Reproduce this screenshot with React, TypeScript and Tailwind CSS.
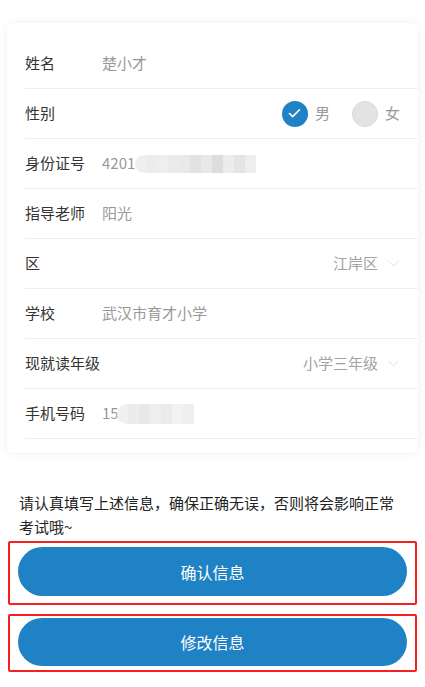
import { ChevronDown, Check } from 'lucide-react';

const font = { fontFamily: '"Noto Sans CJK SC", "Noto Sans", sans-serif' };

const idCells = ['#efefef', '#ececec', '#eeeeee', '#ebebeb', '#e9e9e9', '#e2e2e2', '#e8e8e8', '#dddddd', '#ececec', '#e4e4e4', '#eeeeee'];
const phoneCells = ['#f0f0f0', '#ececec', '#e8e8e8', '#eeeeee', '#ebebeb', '#f3f3f3', '#eeeeee'];

const Mosaic = ({ cells, h }: { cells: string[]; h: string }) => (
    <div className={`flex ${h} blur-[0.6px] rounded-l-full overflow-hidden`}>
        {cells.map((c, i) => (
            <div key={i} className="w-[11px] h-full" style={{ backgroundColor: c }} />
        ))}
    </div>
);

const Row = ({ label, children, right }: { label: string; children?: React.ReactNode; right?: React.ReactNode }) => (
    <div className="ml-[18px] h-[50px] flex items-center border-b border-[#efefef]">
        <div className="w-[77px] shrink-0 text-[15px] text-[#333]">{label}</div>
        <div className="flex-1 flex items-center text-[15px] text-[#999]">{children}</div>
        {right}
    </div>
);

const Select = ({ value }: { value: string }) => (
    <div className="flex items-center gap-[6px] pr-[15px] text-[15px] text-[#a3a3a3]">
        <span>{value}</span>
        <ChevronDown size={19} strokeWidth={1} className="text-[#d4d4d4]" />
    </div>
);

export default function App() {
    return (
        <div className="min-h-[687px] bg-white pt-[23px]" style={font}>
            <div className="mx-[7px] bg-white rounded-[6px] shadow-[0_0_10px_rgba(0,0,0,0.07)] pt-[16px] pb-[14px]">
                <Row label="姓名">楚小才</Row>
                <Row
                    label="性别"
                    right={
                        <div className="flex items-center pr-[18px]">
                            <div className="w-[26px] h-[26px] rounded-full bg-[#1f82c4] flex items-center justify-center">
                                <Check size={15} strokeWidth={2.6} className="text-white" />
                            </div>
                            <span className="ml-[7px] text-[15px] text-[#999]">男</span>
                            <div className="ml-[22px] w-[26px] h-[26px] rounded-full bg-[#e3e3e3] border border-[#d8d8d8]" />
                            <span className="ml-[7px] text-[15px] text-[#999]">女</span>
                        </div>
                    }
                />
                <Row label="身份证号">
                    <span>4201</span>
                    <Mosaic cells={idCells} h="h-[18px]" />
                </Row>
                <Row label="指导老师">阳光</Row>
                <Row label="区" right={<Select value="江岸区" />} />
                <Row label="学校">武汉市育才小学</Row>
                <Row label="现就读年级" right={<Select value="小学三年级" />} />
                <Row label="手机号码">
                    <span>15</span>
                    <div className="-ml-[2px]">
                        <Mosaic cells={phoneCells} h="h-[20px]" />
                    </div>
                </Row>
            </div>

            <p className="mt-[38px] px-[19px] text-[15px] leading-[24px] text-[#222]">
                请认真填写上述信息，确保正确无误，否则将会影响正常考试哦~
            </p>

            <div className="mt-[2px] mx-[8px] border-2 border-[#f51f1f] rounded-[2px] px-[8px] pt-[4px] pb-[7px]">
                <button className="w-full h-[49px] rounded-full bg-[#1f82c4] text-white text-[16px]">确认信息</button>
            </div>
            <div className="mt-[9px] mx-[8px] border-2 border-[#f51f1f] rounded-[2px] px-[8px] pt-[2px] pb-[4px]">
                <button className="w-full h-[48px] rounded-full bg-[#1f82c4] text-white text-[16px]">修改信息</button>
            </div>
        </div>
    );
}
